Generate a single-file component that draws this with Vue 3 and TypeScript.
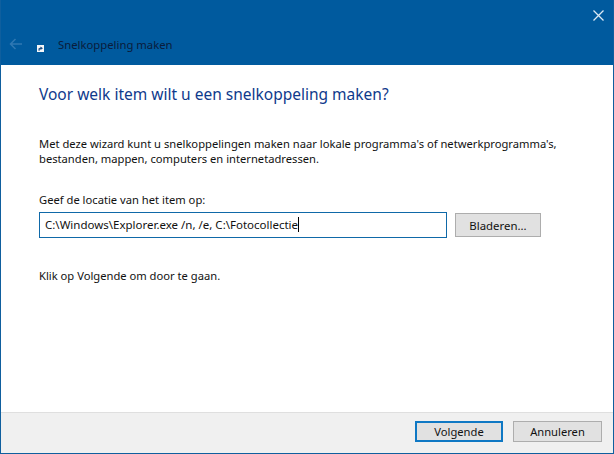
<template>
  <div class="wizard">
    <header class="titlebar">
      <div class="top-row">
        <button class="close" aria-label="Sluiten">
          <svg width="11" height="11" viewBox="0 0 11 11" fill="none" stroke="#dbe9f4" stroke-width="1.300"><path d="M.5.5l10 10M10.500.5l-10 10" /></svg>
        </button>
      </div>
      <div class="nav-row">
        <svg class="back" width="13" height="12" viewBox="0 0 13 12" fill="none" stroke="#2f78b3" stroke-width="1.500"><path d="M13 6H1.500M6.500 1L1.500 6l5 5" /></svg>
        <svg class="shortcut" width="7" height="7" viewBox="0 0 7 7"><rect width="7" height="7" fill="#f4f6f8" /><path d="M1.500 5.800V3.600L3.500 2.500V1.500L6 3.200 3.500 5V3.900L2.700 4.500v1.300z" fill="#1c4f86" /></svg>
        <span class="title">{{ title }}</span>
      </div>
    </header>

    <main class="body">
      <h1>{{ heading }}</h1>
      <p class="intro">
        Met deze wizard kunt u snelkoppelingen maken naar lokale programma's of netwerkprogramma's,<br />
        bestanden, mappen, computers en internetadressen.
      </p>
      <label class="field-label" for="loc">Geef de locatie van het item op:</label>
      <div class="field-row">
        <div class="input" id="loc">{{ location }}<span class="caret"></span></div>
        <button class="btn browse">Bladeren...</button>
      </div>
      <p class="hint">Klik op Volgende om door te gaan.</p>
    </main>

    <footer class="actions">
      <button class="btn primary">Volgende</button>
      <button class="btn cancel">Annuleren</button>
    </footer>
  </div>
</template>

<script setup lang="ts">
const title = 'Snelkoppeling maken'
const heading = 'Voor welk item wilt u een snelkoppeling maken?'
const location = 'C:\\Windows\\Explorer.exe /n, /e, C:\\Fotocollectie'
</script>

<style>
html, body { margin: 0; background: #fff; }
</style>

<style scoped>
.wizard {
  width: 614px;
  height: 454px;
  box-sizing: border-box;
  display: flex;
  flex-direction: column;
  border: 1px solid #0f5f9e;
  border-top: 0;
  font-family: "Noto Sans", "Open Sans", sans-serif;
  font-size: 11.2px;
  color: #111;
  background: #fff;
}
.titlebar { height: 65px; flex: none; background: #005a9e; display: flex; flex-direction: column; }
.top-row { display: flex; justify-content: flex-end; padding: 10px 9px 0 0; }
.close { width: 11px; height: 11px; padding: 0; border: 0; background: none; display: flex; }
.nav-row { display: flex; align-items: center; height: 16px; margin-top: 15px; padding-left: 8px; }
.shortcut { margin: 8px 0 0 15px; }
.title { margin-left: 14px; color: #0a1c3c; font-size: 11.300px; }
.body { flex: 1; padding: 0 0 0 38px; }
h1 { margin: 18px 0 0; font-size: 15.500px; line-height: 22px; font-weight: 400; color: #0f3a8c; }
.intro { margin: 31px 0 0; line-height: 15px; }
.field-label { display: block; margin-top: 26px; line-height: 16px; }
.field-row { display: flex; align-items: center; margin-top: 4px; }
.input {
  width: 408px;
  height: 26px;
  box-sizing: border-box;
  border: 1px solid #0f69a8;
  padding-left: 5px;
  font-size: 11.500px;
  line-height: 24px;
  white-space: nowrap;
}
.caret { display: inline-block; width: 1px; height: 15px; background: #000; vertical-align: -3px; }
.btn {
  box-sizing: border-box;
  font: inherit;
  color: #111;
  background: #e1e1e1;
  border: 1px solid #adadad;
  padding: 0;
}
.browse { width: 86px; height: 24px; margin-left: 8px; font-size: 11.400px; }
.hint { margin: 30px 0 0; line-height: 16px; }
.actions {
  height: 41px;
  flex: none;
  box-sizing: border-box;
  background: #f0f0f0;
  border-top: 1px solid #dfdfdf;
  display: flex;
  justify-content: flex-end;
  align-items: flex-start;
  gap: 10px;
  padding: 8px 11px 0 0;
}
.primary { width: 88px; height: 21px; border: 2px solid #0f78c4; }
.cancel { width: 89px; height: 21px; }
</style>
